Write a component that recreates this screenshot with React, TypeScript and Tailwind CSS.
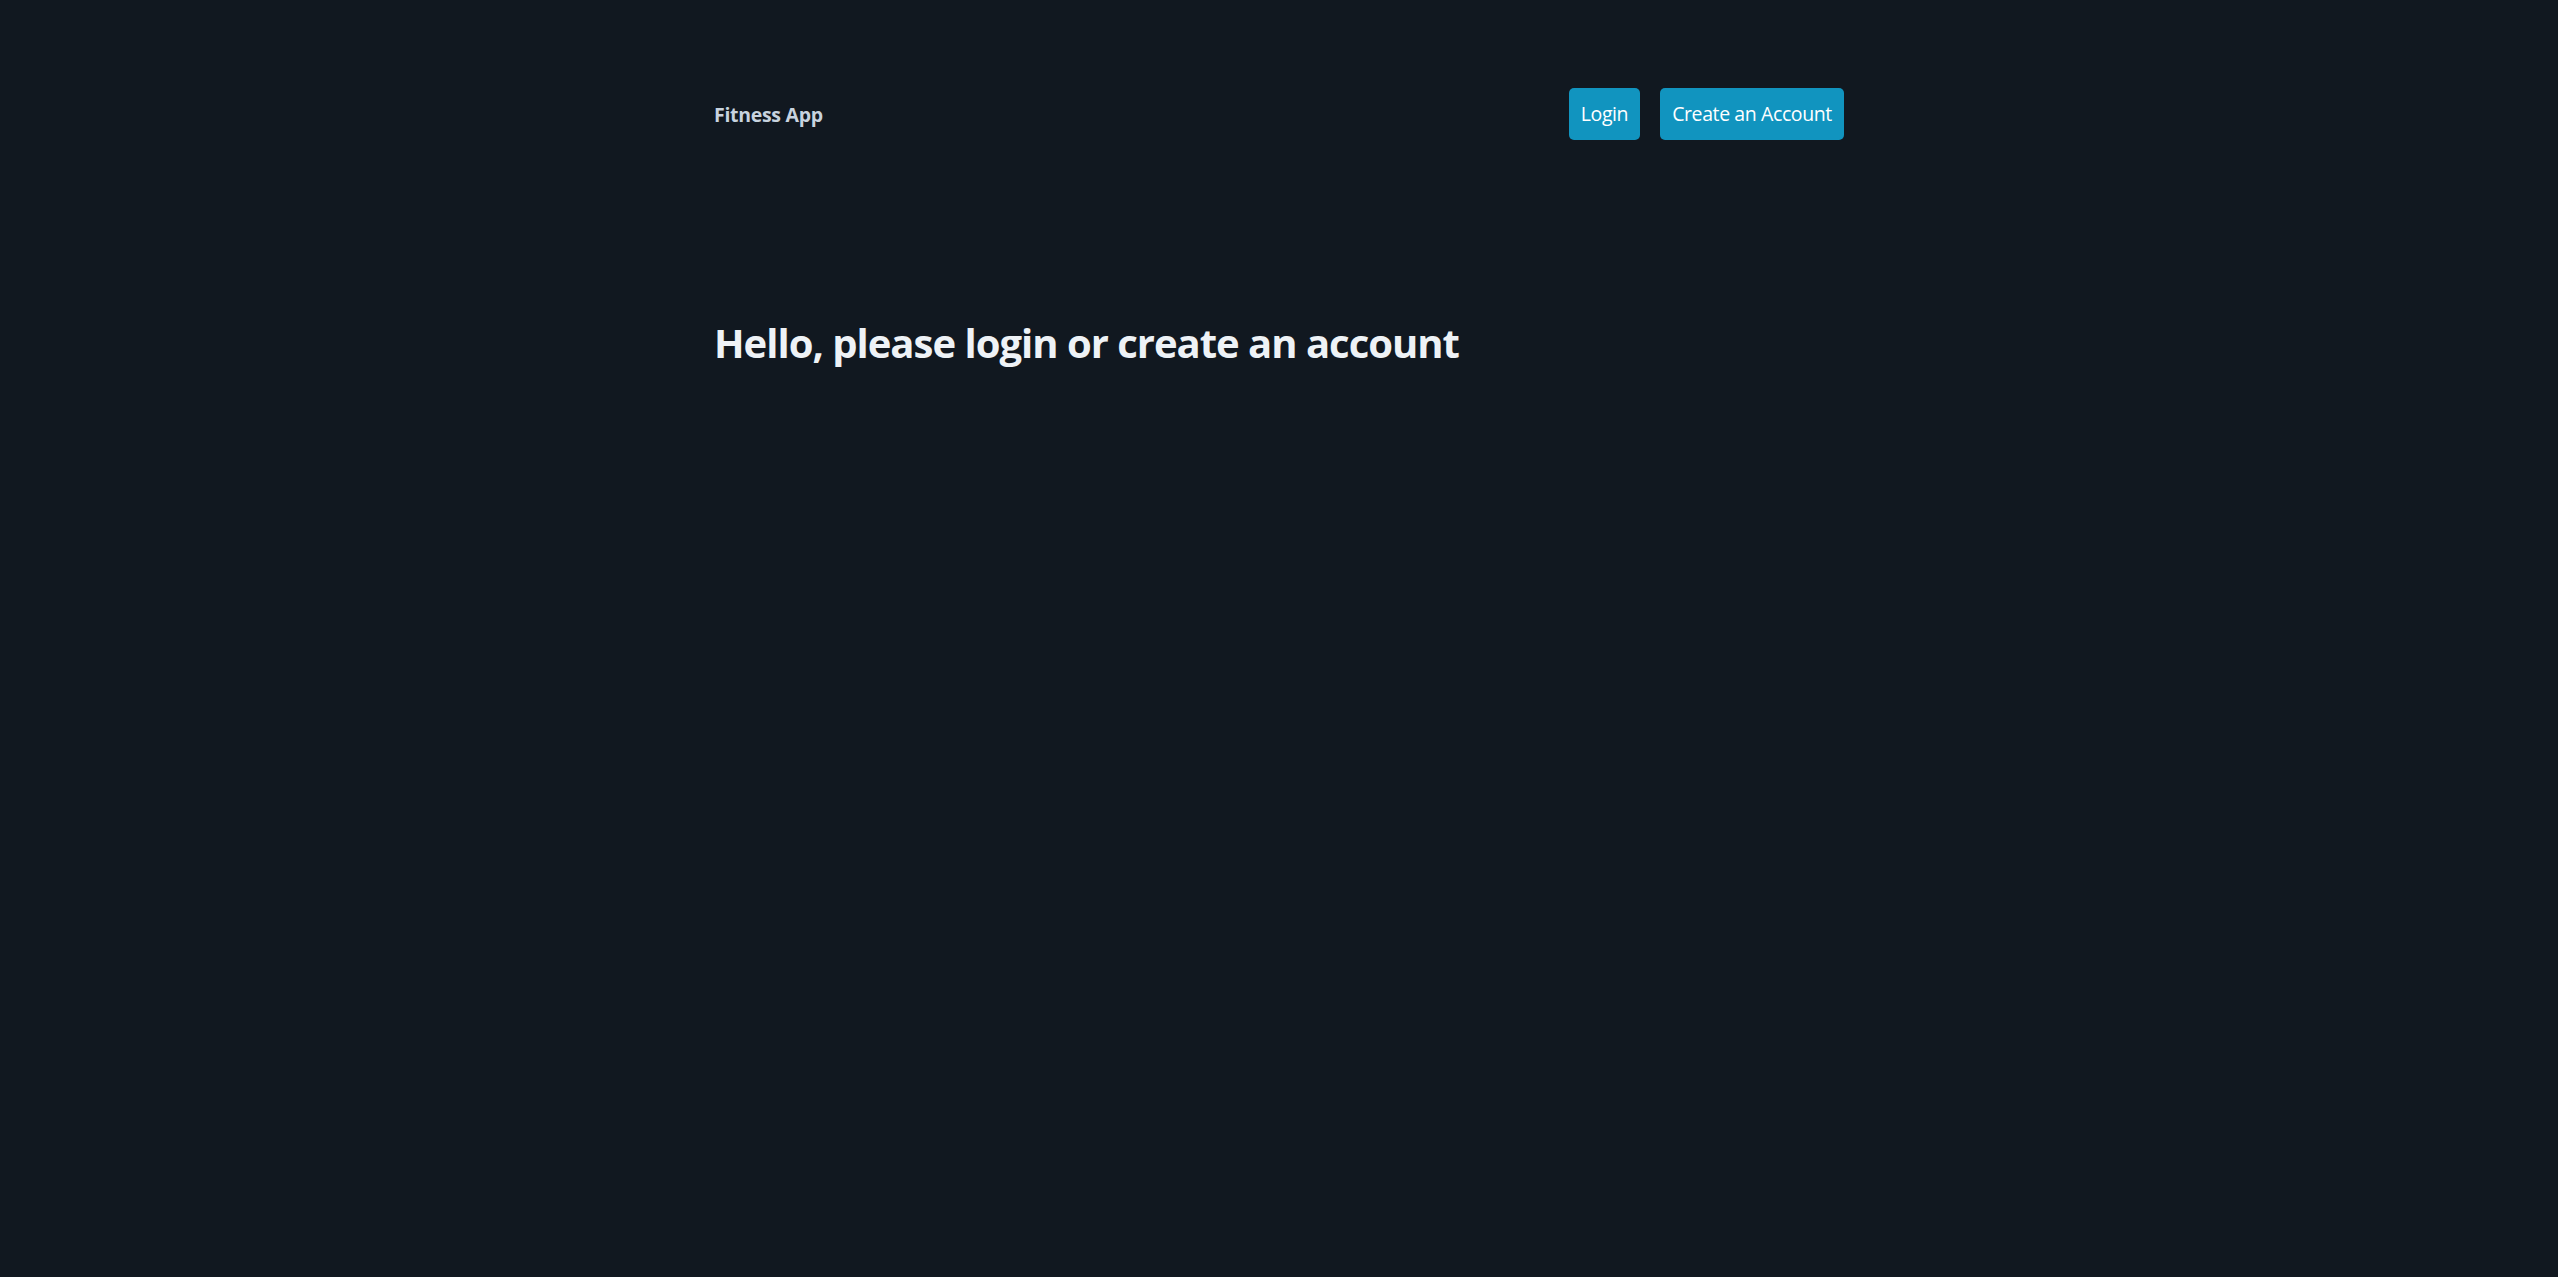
export default function App() {
  return (
    <div className="min-h-screen w-full bg-[#111820] font-['Open_Sans',sans-serif]">
      <div className="mx-auto w-[1130px]">
        {/* Navbar */}
        <nav className="flex items-center justify-between pt-[88px]">
          <span className="mt-[2px] text-[19.5px] font-bold text-[#c8d3df] tracking-[-0.3px]">Fitness App</span>
          <div className="flex gap-5">
            <button className="h-[52px] w-[71px] rounded-[5px] bg-[#1194bf] text-[19.5px] text-white tracking-[-0.4px]">
              Login
            </button>
            <button className="h-[52px] w-[184px] rounded-[5px] bg-[#1194bf] text-[19.5px] text-white tracking-[-0.4px]">
              Create an Account
            </button>
          </div>
        </nav>

        {/* Main */}
        <main className="pt-[183px]">
          <h1 className="text-[40px] font-bold leading-none text-[#eef2f6] tracking-[-1px]">
            Hello, please login or create an account
          </h1>
        </main>
      </div>
    </div>
  );
}
